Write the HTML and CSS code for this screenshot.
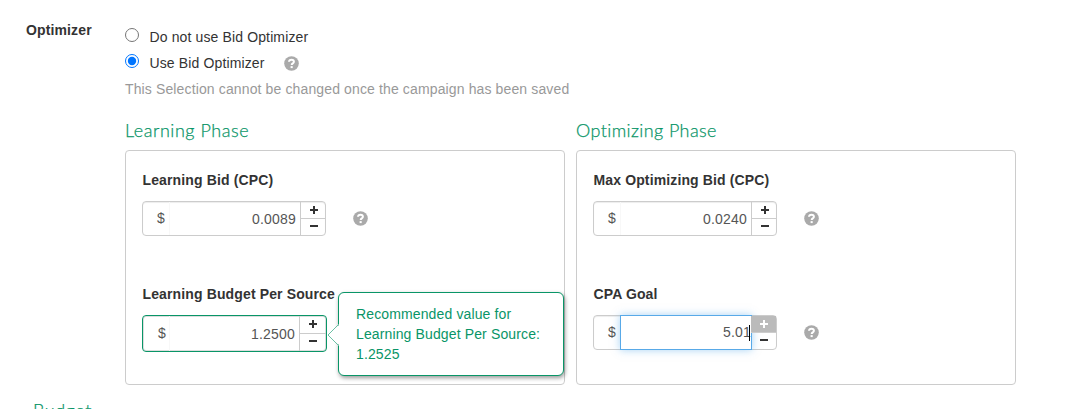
FILE: index.html
```
<!DOCTYPE html>
<html lang="en">

<head>
    <meta charset="UTF-8" />
    <title>Campaign</title>
    <link rel="stylesheet" href="styles.css">
</head>

<body>
    <div class="row">
        <div class="row-label">Optimizer</div>
        <div class="row-content">
            <label class="radio">
                <input type="radio" name="optimizer" />
                <span>Do not use Bid Optimizer</span>
            </label>
            <label class="radio">
                <input type="radio" name="optimizer" checked />
                <span>Use Bid Optimizer</span>
                <svg class="help" viewBox="0 0 15 15"><circle cx="7.5" cy="7.5" r="7.3" /><path d="M5 5.7C5.1 4.3 6.1 3.7 7.5 3.7s2.4.8 2.4 2c0 1.7-2.2 1.6-2.2 3.2" /><rect x="6.6" y="10.1" width="2.1" height="2" /></svg>
            </label>
            <p class="note">This Selection cannot be changed once the campaign has been saved</p>

            <div class="phases">
                <!-- learning phase -->
                <div class="phase">
                    <h4>Learning Phase</h4>
                    <div class="panel">
                        <div class="field">
                            <div class="field-label">Learning Bid (CPC)</div>
                            <div class="field-row">
                                <div class="money">
                                    <span class="addon">$</span>
                                    <input type="text" value="0.0089" />
                                    <div class="stepper">
                                        <button type="button" class="plus"></button>
                                        <button type="button" class="minus"></button>
                                    </div>
                                </div>
                                <svg class="help" viewBox="0 0 15 15"><circle cx="7.5" cy="7.5" r="7.3" /><path d="M5 5.7C5.1 4.3 6.1 3.7 7.5 3.7s2.4.8 2.4 2c0 1.7-2.2 1.6-2.2 3.2" /><rect x="6.6" y="10.1" width="2.1" height="2" /></svg>
                            </div>
                        </div>
                        <div class="field">
                            <div class="field-label">Learning Budget Per Source</div>
                            <div class="field-row">
                                <div class="money recommended">
                                    <span class="addon">$</span>
                                    <input type="text" value="1.2500" />
                                    <div class="stepper">
                                        <button type="button" class="plus"></button>
                                        <button type="button" class="minus"></button>
                                    </div>
                                </div>
                                <div class="tip">
                                    <svg class="tip-arrow" viewBox="0 0 13 24"><path class="fill" d="M13 1L1.5 12L13 23z" /><path class="line" d="M12 1L1 12L12 23" /></svg>
                                    Recommended value for Learning Budget Per Source: 1.2525
                                </div>
                            </div>
                        </div>
                    </div>
                </div>
                <!-- optimizing phase -->
                <div class="phase">
                    <h4 class="optimizing">Optimizing Phase</h4>
                    <div class="panel">
                        <div class="field">
                            <div class="field-label">Max Optimizing Bid (CPC)</div>
                            <div class="field-row">
                                <div class="money">
                                    <span class="addon">$</span>
                                    <input type="text" value="0.0240" />
                                    <div class="stepper">
                                        <button type="button" class="plus"></button>
                                        <button type="button" class="minus"></button>
                                    </div>
                                </div>
                                <svg class="help" viewBox="0 0 15 15"><circle cx="7.5" cy="7.5" r="7.3" /><path d="M5 5.7C5.1 4.3 6.1 3.7 7.5 3.7s2.4.8 2.4 2c0 1.7-2.2 1.6-2.2 3.2" /><rect x="6.6" y="10.1" width="2.1" height="2" /></svg>
                            </div>
                        </div>
                        <div class="field">
                            <div class="field-label">CPA Goal</div>
                            <div class="field-row">
                                <div class="money editing">
                                    <span class="addon">$</span>
                                    <div class="value">5.01<i class="caret"></i></div>
                                    <div class="stepper">
                                        <button type="button" class="plus pressed"></button>
                                        <button type="button" class="minus"></button>
                                    </div>
                                </div>
                                <svg class="help" viewBox="0 0 15 15"><circle cx="7.5" cy="7.5" r="7.3" /><path d="M5 5.7C5.1 4.3 6.1 3.7 7.5 3.7s2.4.8 2.4 2c0 1.7-2.2 1.6-2.2 3.2" /><rect x="6.6" y="10.1" width="2.1" height="2" /></svg>
                            </div>
                        </div>
                    </div>
                </div>
            </div>
        </div>
    </div>
    <h4 class="next">Budget</h4>
</body>

</html>
```

FILE: styles.css
```
* {
    box-sizing: border-box;
}

body {
    margin: 0;
    height: 409px;
    overflow: hidden;
    background-color: #fff;
    color: #333;
    font-family: "Liberation Sans", Arial, sans-serif;
    font-size: 14px;
    line-height: 20px;
    letter-spacing: 0.13px;
}

.row {
    display: flex;
    height: 385px;
    padding: 20px 0 0 26px;
}

.row-label {
    width: 99px;
    font-weight: bold;
}

.radio {
    display: flex;
    height: 26px;
    padding-top: 7px;
}

.radio input {
    width: 14px;
    height: 14px;
    margin: 1px 10.5px 0 0;
}

.radio .help {
    margin: 3px 0 0 19px;
}

.help {
    display: block;
    flex: none;
    width: 15px;
    height: 15px;
}

.help circle {
    fill: #aaa;
}

.help path {
    fill: none;
    stroke: #fff;
    stroke-width: 2;
}

.help rect {
    fill: #fff;
}

.note {
    margin: 7px 0 0;
    color: #999;
}

h4 {
    margin: 0;
    color: #099567;
    font-family: Lato, sans-serif;
    font-size: 18px;
    font-weight: 300;
    line-height: 24px;
    letter-spacing: 0.55px;
    -webkit-text-stroke: 0.25px #099567;
}

h4.optimizing {
    letter-spacing: 0.4px;
}

.phases {
    display: flex;
    gap: 11px;
    margin-top: 19px;
}

.phase {
    width: 440px;
}

.panel {
    height: 235px;
    margin-top: 8px;
    padding: 19px 16px 0;
    border: 1px solid #ccc;
    border-radius: 4px;
}

.field {
    height: 114px;
}

.field-label {
    padding-left: 0.5px;
    font-weight: bold;
    white-space: nowrap;
}

.field-row {
    display: flex;
    position: relative;
    margin-top: 11px;
}

.field-row > .help {
    margin: 10px 0 0 27px;
}

.money {
    display: flex;
    width: 184px;
    height: 35px;
    border: 1px solid #ccc;
    border-radius: 4px;
    box-shadow: inset 0 1px 1px rgba(0, 0, 0, 0.075);
    color: #555;
}

.money.recommended {
    width: 185px;
    height: 37px;
    border-color: #099567;
    box-shadow: inset 0 0 0 1px #ddd;
}

.addon {
    width: 26px;
    padding: 6px 0 0 14px;
}

.recommended .addon {
    padding: 7px 0 0 15px;
}

.money input {
    flex: 1;
    min-width: 0;
    padding: 0 4px 0 0;
    border: none;
    border-left: 1px solid #f8f8f8;
    background: none;
    color: #555;
    font: inherit;
    letter-spacing: 0.2px;
    text-align: right;
}

.stepper {
    display: flex;
    flex-direction: column;
    width: 25px;
    border-left: 1px solid #ccc;
}

.recommended .stepper {
    width: 27px;
}

.stepper button {
    flex: 1;
    position: relative;
    padding: 0;
    border: none;
    background: none;
    color: #333;
}

.stepper .minus {
    border-top: 1px solid #ccc;
}

/* plus and minus signs */
.stepper button::before,
.plus::after {
    content: "";
    position: absolute;
    left: 9px;
    top: 7px;
    width: 8px;
    height: 2px;
    background-color: currentColor;
}

.stepper .minus::before {
    top: 6px;
}

.plus::after {
    left: 12px;
    top: 4px;
    width: 2px;
    height: 8px;
}

.stepper .plus.pressed {
    background-color: #bbb;
    color: #fff;
}

.editing .stepper {
    border-left: none;
    width: 25px;
}

.value {
    flex: 1;
    position: relative;
    margin: -1px 0;
    padding: 6px 0 0;
    border: 1px solid #58a9e8;
    box-shadow: 0 0 8px rgba(82, 168, 236, 0.5);
    background-color: #fff;
    letter-spacing: 0.2px;
    text-align: right;
}

.editing .value {
    margin-right: -1px;
}

.caret {
    position: absolute;
    right: 1px;
    top: 9px;
    width: 1px;
    height: 16px;
    background-color: #000;
}

.tip {
    position: absolute;
    left: 196px;
    top: -23px;
    width: 226px;
    height: 84px;
    padding: 11px 17px;
    border: 1px solid #099567;
    border-radius: 6px;
    box-shadow: 1px 2px 4px rgba(0, 0, 0, 0.4);
    background-color: #fff;
    color: #099567;
}

.tip-arrow {
    position: absolute;
    left: -12px;
    top: 30px;
    width: 13px;
    height: 24px;
}

.tip-arrow .fill {
    fill: #fff;
}

.tip-arrow .line {
    fill: none;
    stroke: #6bbfa4;
}

.next {
    margin: 13px 0 0 33px;
}
```
